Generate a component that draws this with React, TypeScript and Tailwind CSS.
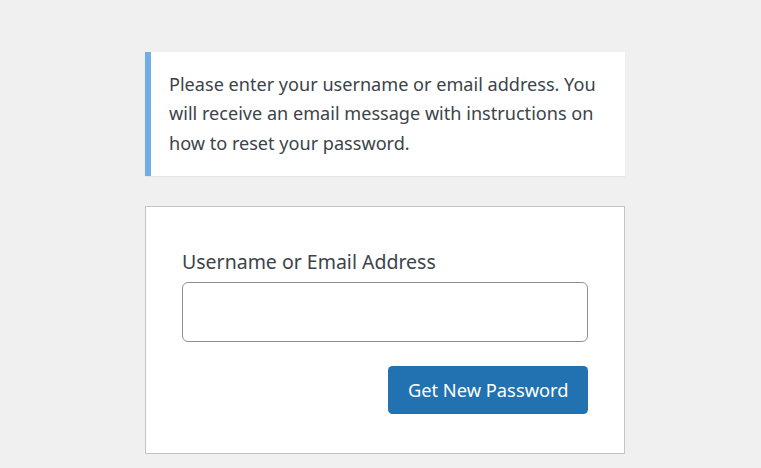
export default function App() {
  const font = { fontFamily: '"Noto Sans", "Open Sans", sans-serif' };
  return (
    <div className="min-h-[468px] bg-[#f0f0f1] text-[#3c434a]" style={font}>
      <div className="ml-[145px] w-[480px] pt-[52px]">
        <div className="border-l-[6px] border-[#72aee6] bg-white py-[18px] pl-[18px] pr-[18px] text-[18.1px] leading-[29.25px] shadow-[0_1px_1px_rgba(0,0,0,0.04)]">
          Please enter your username or email address. You will receive an email message with instructions on how to reset your password.
        </div>
        <form className="mt-[30px] border border-[#c3c4c7] bg-white px-[36px] pt-[39px] pb-[39px]">
          <label className="block text-[19.5px] leading-[31.5px]">Username or Email Address</label>
          <input
            type="text"
            className="mt-[4.5px] block h-[60px] w-full rounded-[6px] border border-[#8c8f94] bg-white px-3 text-[24px] outline-none"
          />
          <div className="mt-[24px] flex justify-end">
            <button
              type="button"
              className="h-[48px] rounded-[4.5px] bg-[#2271b1] px-[19.5px] text-[18.3px] text-white"
            >
              Get New Password
            </button>
          </div>
        </form>
      </div>
    </div>
  );
}
